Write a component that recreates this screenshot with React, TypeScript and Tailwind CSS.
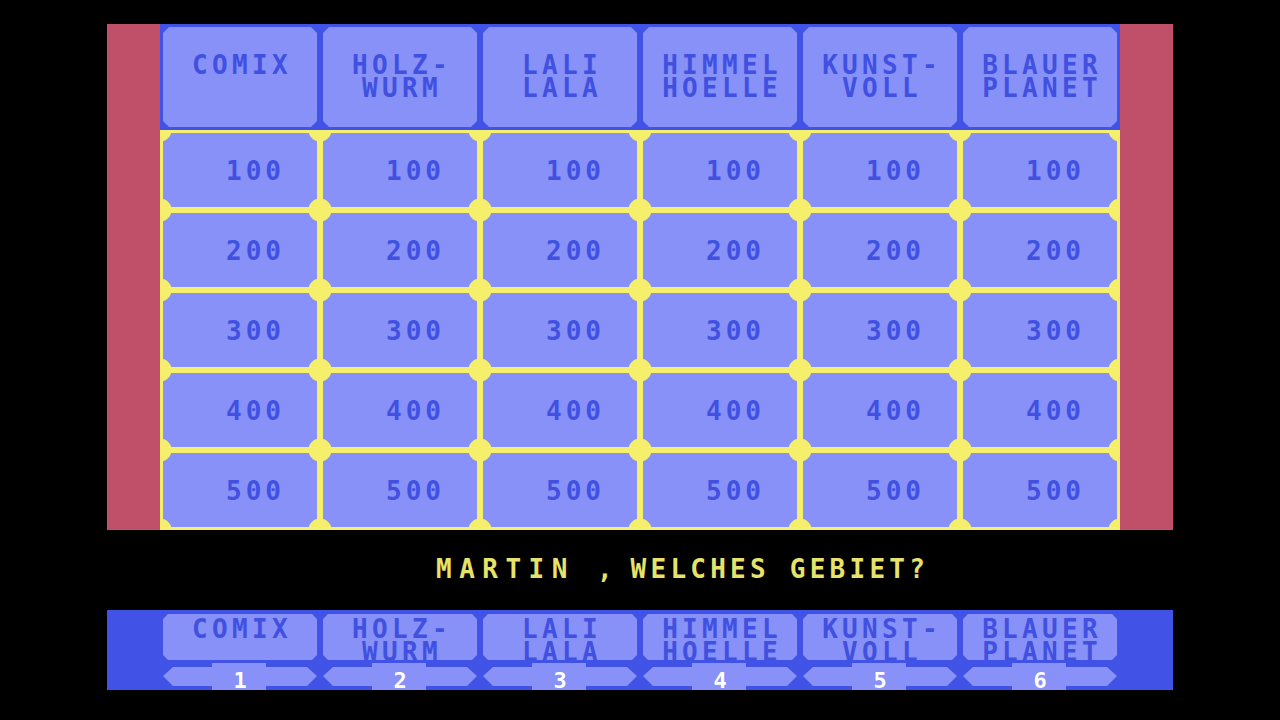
import React from "react";

const categories: string[][] = [
  ["COMIX"],
  ["HOLZ-", "WURM"],
  ["LALI", "LALA"],
  ["HIMMEL", "HOELLE"],
  ["KUNST-", "VOLL"],
  ["BLAUER", "PLANET"],
];

const values = [100, 200, 300, 400, 500];

function HeaderCell({ lines }: { lines: string[] }) {
  return (
    <div className="h-[100px] bg-[#8891f8] [clip-path:polygon(6px_0,calc(100%_-_6px)_0,100%_6px,100%_calc(100%_-_6px),calc(100%_-_6px)_100%,6px_100%,0_calc(100%_-_6px),0_6px)] pt-[27px] pl-[4px] flex flex-col items-center text-[#4050e0] text-[26px] font-bold leading-[23px] tracking-[4.3px]">
      {lines.map((l) => (
        <div key={l}>{l}</div>
      ))}
    </div>
  );
}

function ValueCell({ v }: { v: number }) {
  return (
    <div className="bg-[#8891f8] [background-image:radial-gradient(circle_at_-3px_-3px,#f6ef6b_11px,transparent_12px),radial-gradient(circle_at_calc(100%_+_3px)_-3px,#f6ef6b_11px,transparent_12px),radial-gradient(circle_at_-3px_calc(100%_+_3px),#f6ef6b_11px,transparent_12px),radial-gradient(circle_at_calc(100%_+_3px)_calc(100%_+_3px),#f6ef6b_11px,transparent_12px)] flex items-center pt-[2px] pl-[63px] text-[#4050e0] text-[26px] font-bold leading-[23px] tracking-[4px]">
      {v}
    </div>
  );
}

function BottomColumn({ lines, n }: { lines: string[]; n: number }) {
  return (
    <div className="flex flex-col gap-[3px]">
      <div className="h-[46px] bg-[#8891f8] [clip-path:polygon(5px_0,calc(100%_-_5px)_0,100%_5px,100%_calc(100%_-_5px),calc(100%_-_5px)_100%,5px_100%,0_calc(100%_-_5px),0_5px)] pt-[4px] pl-[4px] flex flex-col items-center text-[#4050e0] text-[26px] font-bold leading-[23px] tracking-[4.3px] overflow-hidden">
        {lines.map((l) => (
          <div key={l}>{l}</div>
        ))}
      </div>
      <div className="h-[27px] bg-[#8891f8] [clip-path:polygon(0_13px,10px_4px,49px_4px,49px_0,103px_0,103px_4px,144px_4px,100%_13px,144px_23px,103px_23px,103px_100%,49px_100%,49px_23px,10px_23px)] flex justify-center pt-[6px] text-white text-[22px] font-bold leading-[23px]">
        {n}
      </div>
    </div>
  );
}

export default function App() {
  return (
    <div className="w-[1280px] h-[720px] bg-black overflow-hidden font-['DejaVu_Sans_Mono',monospace]">
      <div className="pt-[24px] pl-[107px]">
        <div className="flex w-[1066px] h-[506px]">
          <div className="w-[53px] bg-[#c0506a]" />
          <div className="w-[960px] flex flex-col">
            <div className="h-[106px] bg-[#4152e6] p-[3px] grid grid-cols-6 gap-x-[6px]">
              {categories.map((c, i) => (
                <HeaderCell key={i} lines={c} />
              ))}
            </div>
            <div className="h-[400px] bg-[#f6ef6b] p-[3px] grid grid-cols-6 grid-rows-5 gap-[6px]">
              {values.map((v) =>
                categories.map((_, i) => <ValueCell key={`${v}-${i}`} v={v} />)
              )}
            </div>
          </div>
          <div className="w-[53px] bg-[#c0506a]" />
        </div>
        <div className="h-[80px] pt-[28px] pl-[329px] flex items-start text-[#e6e26a] text-[26px] font-bold leading-[23px]">
          <span className="tracking-[7.5px]">MARTIN</span>
          <span className="ml-[22px]">,</span>
          <span className="ml-[18px] tracking-[4.25px] whitespace-pre">WELCHES GEBIET?</span>
        </div>
        <div className="flex w-[1066px] h-[80px] bg-[#4152e6]">
          <div className="w-[53px]" />
          <div className="w-[960px] px-[3px] pt-[4px] grid grid-cols-6 gap-x-[6px]">
            {categories.map((c, i) => (
              <BottomColumn key={i} lines={c} n={i + 1} />
            ))}
          </div>
          <div className="w-[53px]" />
        </div>
      </div>
    </div>
  );
}
